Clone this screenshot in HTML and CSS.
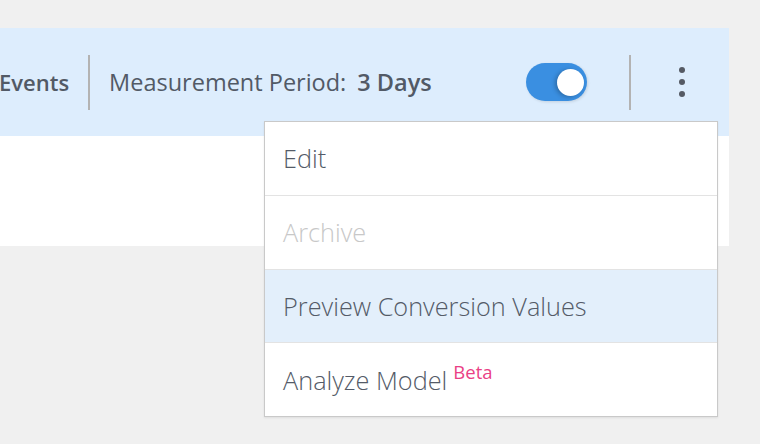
FILE: index.html
```html
<!DOCTYPE html>
<html lang="en">
<head>
<meta charset="utf-8">
<link rel="stylesheet" href="styles.css">
</head>
<body>
<div class="page">
  <div class="card">
    <div class="toolbar">
      <span class="title">Events</span>
      <span class="vdivider"></span>
      <span class="label">Measurement Period:</span>
      <span class="value">3 Days</span>
      <span class="toggle"><span class="knob"></span></span>
      <span class="vdivider right"></span>
      <span class="more">
        <svg width="10" height="32" viewBox="0 0 10 32"><circle cx="5" cy="4" r="3"/><circle cx="5" cy="16" r="3"/><circle cx="5" cy="28" r="3"/></svg>
      </span>
    </div>
    <div class="panel"></div>
    <ul class="menu">
      <li class="item">Edit</li>
      <li class="item disabled">Archive</li>
      <li class="item active">Preview Conversion Values</li>
      <li class="item">Analyze Model<sup class="beta">Beta</sup></li>
    </ul>
  </div>
</div>
</body>
</html>
```
FILE: styles.css
```css
html, body {
  margin: 0;
  padding: 0;
  background: #f0f0f0;
  font-family: "Open Sans", "Liberation Sans", sans-serif;
}
.page {
  box-sizing: border-box;
  min-height: 444px;
  padding-top: 28px;
}
.card {
  position: relative;
  width: 729px;
}
.toolbar {
  height: 108px;
  background: #ddedfd;
  display: flex;
  align-items: center;
  color: #525a66;
  font-size: 23.5px;
}
.title {
  font-size: 22px;
  font-weight: 600;
  margin-left: -1px;
  margin-right: 19px;
}
.vdivider {
  width: 2px;
  height: 55px;
  background: #b3b3b3;
}
.label {
  margin-left: 19px;
}
.value {
  font-weight: 600;
  margin-left: 11px;
}
.toggle {
  position: relative;
  margin-left: auto;
  width: 61px;
  height: 38px;
  border-radius: 19px;
  background: #3a8fe1;
  box-shadow: 1px 1px 3px rgba(0,0,0,0.12);
}
.knob {
  position: absolute;
  right: 3px;
  top: 6px;
  width: 27px;
  height: 27px;
  border-radius: 50%;
  background: #fff;
  box-shadow: -2px 1px 4px rgba(0,0,0,0.25);
}
.vdivider.right {
  margin-left: 42px;
}
.more {
  width: 24px;
  margin-left: 39px;
  margin-right: 35px;
  display: flex;
  justify-content: center;
}
.more svg {
  fill: #555a64;
}
.panel {
  height: 110px;
  background: #fff;
}
.menu {
  position: absolute;
  left: 264px;
  top: 93px;
  width: 452px;
  margin: 0;
  padding: 0;
  list-style: none;
  background: #fff;
  border: 1px solid #c9c9c9;
  box-shadow: 0 1px 2px rgba(0,0,0,0.08);
}
.item {
  height: 72.75px;
  display: flex;
  align-items: center;
  padding-left: 18px;
  font-size: 25.3px;
  font-weight: 300;
  color: #545b68;
  border-bottom: 1px solid #e3e3e3;
}
.item:last-child {
  border-bottom: none;
}
.item.disabled {
  color: #c8c8c8;
}
.item.active {
  background: #e3effb;
}
.beta {
  align-self: flex-start;
  margin-top: 16px;
  margin-left: 6px;
  font-size: 18.5px;
  font-weight: 400;
  color: #ea3f85;
}
```
